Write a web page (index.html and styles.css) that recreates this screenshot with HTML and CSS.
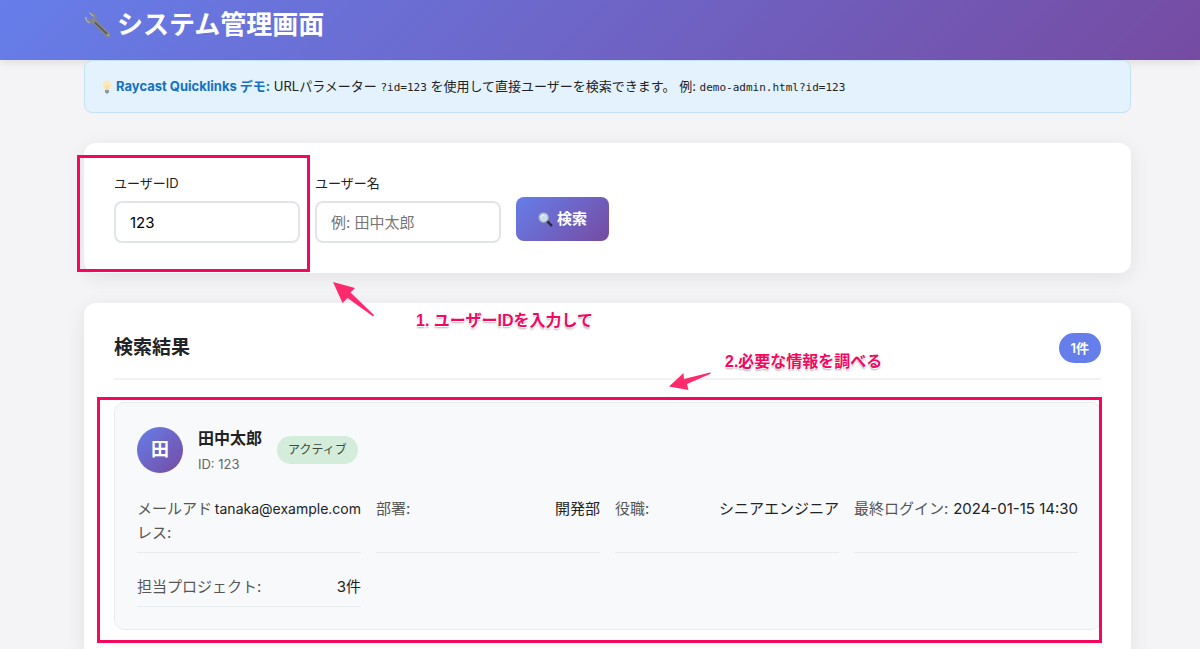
FILE: index.html
```html
<!DOCTYPE html>
<html lang="ja">
<head>
  <meta charset="UTF-8" />
  <meta name="viewport" content="width=device-width, initial-scale=1.0" />
  <title>システム管理画面</title>
  <link rel="stylesheet" href="styles.css">
</head>
<body>

<header class="header">
  <svg class="icon-wrench" viewBox="0 0 28 28" aria-hidden="true">
    <path d="M5 1.5 L9 5.3 L8.3 8.3 L5.3 9 L1.4 5.2 C.4 8.5 2.1 11.7 5 12.5 C6.6 12.9 8 12.6 9 12.4 L22 25.5 C23.2 26.8 25 26.8 26 25.8 C27.1 24.6 27 23 25.8 21.9 L12.4 9 C13.3 6.3 12.4 3.4 10 2 C8.4 1.1 6.6 1 5 1.5 Z" fill="#85878c"/>
    <path d="M11 11.5 L23 23" stroke="#55545a" stroke-width="1.6"/>
    <path d="M5.5 1.8 L9.5 5.3 M2 6 C1.5 9 3 11 5.5 11.5" stroke="#c3c6cb" fill="none"/>
    <circle cx="24" cy="24" r="1" fill="#a9a6bd"/>
  </svg>
  <h1>システム管理画面</h1>
</header>

<main class="container">
  <div class="notice">
    <svg class="icon-bulb" viewBox="0 0 10 14" aria-hidden="true">
      <path d="M5 .5 C2.3 .5 .7 2.4 .7 4.7 C.7 7 2.7 8 3 10 L7 10 C7.3 8 9.3 7 9.3 4.7 C9.3 2.4 7.7 .5 5 .5 Z" fill="#fbe9b7"/>
      <path d="M3.6 5.5 L4.3 9.5 M6.4 5.5 L5.7 9.5" stroke="#e8c988" stroke-width=".6"/>
      <path d="M3 10 H7 V12 L6 13.5 H4 L3 12 Z" fill="#8f979c"/>
    </svg>
    <p><strong>Raycast Quicklinks デモ:</strong> URLパラメーター <code>?id=123</code> を使用して直接ユーザーを検索できます。 例: <code>demo-admin.html?id=123</code></p>
  </div>

  <section class="card">
    <form class="search-form">
      <div class="form-group">
        <label for="userId">ユーザーID</label>
        <input type="text" id="userId" value="123">
      </div>
      <div class="form-group">
        <label for="userName">ユーザー名</label>
        <input type="text" id="userName" placeholder="例: 田中太郎">
      </div>
      <button type="button" class="search-btn">
        <svg class="icon-search" viewBox="0 0 15 15" aria-hidden="true">
          <path d="M8.7 8.7 L13.3 13.3" stroke="#292a34" stroke-width="2.4" stroke-linecap="round"/>
          <circle cx="5.6" cy="5.6" r="4.7" fill="#c9dcf1" stroke="#a1a6b2" stroke-width="1.2"/>
          <path d="M3 5.2 C3.2 3.8 4.2 3 5.6 2.9" stroke="#fff" fill="none"/>
        </svg>
        検索
      </button>
    </form>
    <div class="mark mark-id"></div>
  </section>

  <section class="card">
    <div class="results-header">
      <h2>検索結果</h2>
      <span class="count">1件</span>
    </div>

    <article class="user-card">
      <div class="user-header">
        <div class="avatar">田</div>
        <div class="user-info">
          <h3>田中太郎</h3>
          <p>ID: 123</p>
        </div>
        <span class="status">アクティブ</span>
      </div>
      <dl class="details">
        <div class="detail"><dt>メールアドレス:</dt><dd class="mail">tanaka@example.com</dd></div>
        <div class="detail"><dt>部署:</dt><dd>開発部</dd></div>
        <div class="detail"><dt>役職:</dt><dd>シニアエンジニア</dd></div>
        <div class="detail"><dt>最終ログイン:</dt><dd>2024-01-15 14:30</dd></div>
        <div class="detail"><dt>担当プロジェクト:</dt><dd>3件</dd></div>
      </dl>
    </article>

    <!-- 手順の注釈 -->
    <div class="mark mark-result"></div>
    <svg class="arrow arrow-id" viewBox="0 0 42 36" aria-hidden="true">
      <path d="M0 0 L22 6 L17.500 10.500 L41 33 C41 34 40 34.500 39.500 34 L14.500 16 L9.500 21 Z"/>
    </svg>
    <p class="note note-id">1. ユーザーIDを入力して</p>
    <svg class="arrow arrow-result" viewBox="0 0 42 20" aria-hidden="true">
      <path d="M0 14.500 L14.500 1 L15 7 L41 .5 C42 .5 42 1.500 41 2 L18 12 L19.500 18 Z"/>
    </svg>
    <p class="note note-result">2.必要な情報を調べる</p>
  </section>
</main>

</body>
</html>
```

FILE: styles.css
```css
* {
  margin: 0;
  padding: 0;
  box-sizing: border-box;
}

body {
  font-family: Inter, "Noto Sans CJK JP", sans-serif;
  font-size: 15px;
  line-height: 24px;
  color: #212225;
  background: #f4f4f6;
}

.header {
  display: flex;
  align-items: center;
  gap: 5px;
  padding: 5px 84px 15px;
  color: white;
  background: linear-gradient(135deg, #667eea 0%, #764ba2 100%);
  box-shadow: 0 2px 10px rgba(0,0,0,0.1);
}

.header h1 {
  font-size: 26px;
  line-height: 40px;
}

.icon-wrench {
  width: 28px;
  height: 28px;
}

.container {
  display: flex;
  flex-direction: column;
  gap: 30px;
  margin: 0 69px 0 84px;
}

.notice {
  position: relative;
  display: flex;
  align-items: center;
  gap: 4px;
  padding: 14px 17px;
  font-size: 13px;
  line-height: 23px;
  background: #e3f2fd;
  border: 1px solid #c3e2f3;
  border-radius: 8px;
}

.notice strong {
  color: #1470c4;
}

.notice code {
  font-family: "DejaVu Sans Mono", monospace;
  font-size: 11px;
  line-height: 1;
}

.icon-bulb {
  width: 10px;
  height: 14px;
}

.card {
  position: relative;
  padding: 30px;
  background: white;
  border-radius: 12px;
  box-shadow: 0 4px 20px rgba(0,0,0,0.08);
}

.search-form {
  display: flex;
  align-items: flex-end;
  gap: 15px;
}

.form-group {
  display: flex;
  flex-direction: column;
  gap: 8px;
  width: 186px;
}

.form-group label {
  font-size: 13px;
  line-height: 20px;
}

.form-group input {
  width: 100%;
  height: 42px;
  padding: 0 14px;
  font: inherit;
  color: #000;
  border: 2px solid #e1e5e9;
  border-radius: 8px;
}

.form-group input::placeholder {
  color: #757575;
}

.search-btn {
  display: flex;
  align-items: center;
  justify-content: center;
  gap: 4px;
  height: 44px;
  margin-bottom: 2px;
  padding: 0 22px;
  font: inherit;
  font-weight: 600;
  color: white;
  background: linear-gradient(135deg, #667eea 0%, #764ba2 100%);
  border: none;
  border-radius: 8px;
  cursor: pointer;
}

.icon-search {
  width: 15px;
  height: 15px;
}

.results-header {
  display: flex;
  align-items: center;
  justify-content: space-between;
  margin-bottom: 22px;
  padding-bottom: 15px;
  border-bottom: 2px solid #f1f2f4;
}

.results-header h2 {
  font-size: 19px;
  line-height: 30px;
}

.count {
  padding: 4px 12px;
  font-size: 13px;
  line-height: 22px;
  font-weight: 600;
  color: white;
  background: #667eea;
  border-radius: 15px;
}

.user-card {
  padding: 22px;
  background: #f8f9fb;
  border: 1px solid #e9ecef;
  border-radius: 10px;
}

.user-header {
  display: flex;
  align-items: center;
  gap: 15px;
  margin-bottom: 15px;
}

.avatar {
  width: 46px;
  height: 46px;
  font-size: 18px;
  line-height: 46px;
  font-weight: bold;
  text-align: center;
  color: white;
  background: linear-gradient(135deg, #667eea 0%, #764ba2 100%);
  border-radius: 50%;
}

.user-info h3 {
  font-size: 16px;
  line-height: 26px;
}

.user-info p {
  padding-top: 2px;
  font-size: 13px;
  line-height: 22px;
  color: #666;
}

.status {
  padding: 3px 11px;
  font-size: 12px;
  line-height: 22px;
  color: #3c4a40;
  background: #d4edda;
  border-radius: 14px;
}

.details {
  display: grid;
  grid-template-columns: repeat(4, 1fr);
  gap: 15px;
}

.detail {
  display: flex;
  justify-content: space-between;
  padding: 7px 0;
  border-bottom: 1px solid #e9ecef;
}

.detail dt {
  color: #555;
}

.detail .mail {
  font-size: 14px;
}

/* 注釈 */
.mark {
  position: absolute;
  border: 3px solid #f5075f;
}

.mark-id {
  top: 12px;
  left: -7px;
  width: 233px;
  height: 117px;
}

.mark-result {
  top: 94px;
  left: 13px;
  right: 29px;
  height: 246px;
}

.arrow {
  position: absolute;
  fill: #ff2a6d;
}

.arrow-id {
  top: -21px;
  left: 249px;
  width: 42px;
  height: 36px;
}

.arrow-result {
  top: 69px;
  left: 585px;
  width: 42px;
  height: 20px;
}

.note {
  position: absolute;
  font-family: "Liberation Sans", "Noto Sans CJK JP", sans-serif;
  font-size: 16px;
  font-weight: bold;
  color: #f5075f;
  white-space: nowrap;
  text-shadow: -1px -1px 0 #fff, 1px 1px 0 #fff, 0 2px 2px #b5b5b5;
}

.note-id {
  top: 6px;
  left: 332px;
}

.note-result {
  top: 47px;
  left: 641px;
}
```
